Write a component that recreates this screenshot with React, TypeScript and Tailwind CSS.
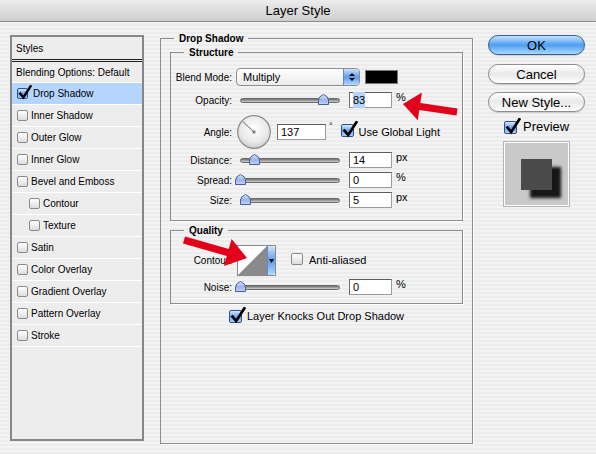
import React from "react";

const FONT = "font-['Liberation_Sans',Arial,sans-serif]";

function Checkbox({ checked, size = 11 }: { checked?: boolean; size?: number }) {
  const dim = size === 13 ? "w-[13px] h-[13px]" : size === 12 ? "w-[12px] h-[12px]" : "w-[11px] h-[11px]";
  if (checked) {
    return (
      <span
        className={`relative inline-block shrink-0 rounded-[2px] border border-[#2d4f8f] bg-linear-to-b from-[#d6e8fe] via-[#6aa6ee] to-[#a9d2fb] ${dim}`}
      >
        <svg
          className="absolute left-[0px] top-[-4px]"
          width={size + 3}
          height={size + 4}
          viewBox="0 0 14 15"
        >
          <path d="M2.2 8.6 L5.4 12.4 L12.6 1.2" stroke="#000" strokeWidth="2.4" fill="none" strokeLinecap="square" />
        </svg>
      </span>
    );
  }
  return (
    <span
      className={`inline-block shrink-0 rounded-[2px] border border-[#8a8a8a] bg-linear-to-b from-[#ffffff] to-[#dcdcdc] ${dim}`}
    />
  );
}

function Slider({ value }: { value: number }) {
  return (
    <div className="relative w-[108px] h-[16px] px-[4px] flex items-center">
      <div className="w-full h-[5px] rounded-full border border-[#6b6b6b] bg-linear-to-b from-[#6e6e6e] to-[#d0d0d0]" />
      <svg className="absolute top-[2px]" style={{ left: 4 + value - 5.5 }} width="11" height="11" viewBox="0 0 11 11">
        <defs>
          <linearGradient id={`th${value}`} x1="0" y1="0" x2="0" y2="1">
            <stop offset="0" stopColor="#dbe6fb" />
            <stop offset="0.55" stopColor="#98b3ea" />
            <stop offset="1" stopColor="#c3d6f7" />
          </linearGradient>
        </defs>
        <path d="M5.5 0.5 Q10.5 2.5 10.5 6 L10.5 10.5 L0.5 10.5 L0.5 6 Q0.5 2.5 5.5 0.5 Z" fill={`url(#th${value})`} stroke="#4d6291" strokeWidth="1" />
      </svg>
    </div>
  );
}

function NumField({ value, w = "w-[43px]", selected }: { value: string; w?: string; selected?: boolean }) {
  return (
    <div
      className={`${w} h-[16px] bg-white border border-[#9a9a9a] border-t-[#5c5c5c] border-l-[#6c6c6c] pl-[3px] flex items-center text-[11px]`}
    >
      <span className={selected ? "bg-[#b4d4fd]" : ""}>{value}</span>
    </div>
  );
}

function Label({ children }: { children: React.ReactNode }) {
  return <div className="w-[61px] mr-[4px] text-right shrink-0">{children}</div>;
}

function Group({
  title,
  className,
  legendClass = "ml-[13px]",
  children,
}: {
  title: string;
  className?: string;
  legendClass?: string;
  children: React.ReactNode;
}) {
  return (
    <fieldset className={`border border-[#8c8c8c] shadow-[1px_1px_0_#ffffff] ${className ?? ""}`}>
      <legend className={`${legendClass} px-[5px] font-bold text-[10px] leading-[13px]`}>{title}</legend>
      {children}
    </fieldset>
  );
}

const styleRows: { name: string; checked?: boolean; indent?: boolean; active?: boolean }[] = [
  { name: "Drop Shadow", checked: true, active: true },
  { name: "Inner Shadow" },
  { name: "Outer Glow" },
  { name: "Inner Glow" },
  { name: "Bevel and Emboss" },
  { name: "Contour", indent: true },
  { name: "Texture", indent: true },
  { name: "Satin" },
  { name: "Color Overlay" },
  { name: "Gradient Overlay" },
  { name: "Pattern Overlay" },
  { name: "Stroke" },
];

function StylesList() {
  return (
    <div className="mt-[13px] w-[134px] h-[406px] border-2 border-[#878787] bg-[#ededed] shrink-0">
      <div className="h-[25px] flex items-center pl-[4px] border-b-[3px] border-double border-[#1e1e1e]">Styles</div>
      <div className="h-[21px] flex items-center pl-[4px] border-b border-white">Blending Options: Default</div>
      {styleRows.map((r) => (
        <div
          key={r.name}
          className={`h-[22px] flex items-center border-b border-white ${r.indent ? "pl-[17px]" : "pl-[5px]"} ${
            r.active ? "bg-[#b5d5ff]" : ""
          }`}
        >
          <Checkbox checked={r.checked} />
          <span className={r.checked ? "ml-[5px]" : "ml-[3px]"}>{r.name}</span>
        </div>
      ))}
    </div>
  );
}

function BlendSelect() {
  return (
    <div className="w-[124px] h-[18px] rounded-[4px] border border-[#8e8e8e] bg-linear-to-b from-[#ffffff] to-[#ececec] flex overflow-hidden">
      <div className="flex-1 pl-[6px] flex items-center text-[11px]">Multiply</div>
      <div className="w-[16px] h-full border-l border-[#6d86b8] bg-linear-to-b from-[#cfe3fd] via-[#5c9ded] to-[#b3d8ff] flex flex-col items-center justify-center gap-[2px]">
        <svg width="6" height="3" viewBox="0 0 6 3"><path d="M0 3 L3 0 L6 3 Z" fill="#000" /></svg>
        <svg width="6" height="3" viewBox="0 0 6 3"><path d="M0 0 L3 3 L6 0 Z" fill="#000" /></svg>
      </div>
    </div>
  );
}

function Dial() {
  return (
    <svg width="34" height="36" viewBox="0 0 34 36" className="ml-[1px] shrink-0">
      <defs>
        <radialGradient id="dial" cx="0.5" cy="0.4" r="0.6">
          <stop offset="0" stopColor="#ffffff" />
          <stop offset="0.7" stopColor="#e8e8e8" />
          <stop offset="1" stopColor="#cdcdcd" />
        </radialGradient>
      </defs>
      <circle cx="17" cy="18" r="16.3" fill="url(#dial)" stroke="#8c8c8c" strokeWidth="1.2" />
      <line x1="17" y1="18" x2="6" y2="7.8" stroke="#555" strokeWidth="0.9" />
      <rect x="15.6" y="16.6" width="2.8" height="2.8" fill="#777" />
    </svg>
  );
}

function ContourPicker() {
  return (
    <div className="w-[39px] h-[31px] border border-[#8a8a8a] flex shrink-0 bg-white">
      <svg width="29" height="29" viewBox="0 0 29 29" className="shrink-0">
        <rect width="29" height="29" fill="#ffffff" />
        <path d="M0 29 L29 0 L29 29 Z" fill="#8a8a8a" />
      </svg>
      <div className="flex-1 rounded-r-[3px] border-l border-[#6d86b8] bg-linear-to-b from-[#cfe3fd] via-[#5c9ded] to-[#b3d8ff] flex items-center justify-center">
        <svg width="5" height="4" viewBox="0 0 5 4"><path d="M0 0 L5 0 L2.5 4 Z" fill="#000" /></svg>
      </div>
    </div>
  );
}

function MainGroup() {
  return (
    <Group
      title="Drop Shadow"
      legendClass="ml-[4px]"
      className="ml-[16px] mt-[10px] w-[313px] h-[412px] px-[9px] shrink-0"
    >
      <Group title="Structure" className="mt-[1px] w-full">
        <div className="pt-[9px] pb-[11px] flex flex-col">
          <div className="h-[18px] flex items-center">
            <Label>Blend Mode:</Label>
            <BlendSelect />
            <div className="ml-[5px] w-[33px] h-[14px] bg-black border border-[#7a7a7a]" />
          </div>
          <div className="mt-[5px] h-[18px] flex items-center">
            <Label>Opacity:</Label>
            <Slider value={83} />
            <div className="ml-[5px]"><NumField value="83" selected /></div>
            <span className="ml-[4px] self-start text-[11px] leading-[12px]">%</span>
          </div>
          <div className="mt-[5px] h-[36px] flex items-center">
            <Label>Angle:</Label>
            <Dial />
            <div className="ml-[6px]"><NumField value="137" w="w-[49px]" /></div>
            <span className="ml-[3px] self-start mt-[8px] text-[9px] leading-[9px]">°</span>
            <span className="ml-[8px]"><Checkbox checked size={13} /></span>
            <span className="ml-[5px] text-[11px]">Use Global Light</span>
          </div>
          <div className="mt-[1px] h-[18px] flex items-center">
            <Label>Distance:</Label>
            <Slider value={14} />
            <div className="ml-[5px]"><NumField value="14" /></div>
            <span className="ml-[4px] self-start text-[11px] leading-[12px]">px</span>
          </div>
          <div className="mt-[2px] h-[18px] flex items-center">
            <Label>Spread:</Label>
            <Slider value={0} />
            <div className="ml-[5px]"><NumField value="0" /></div>
            <span className="ml-[4px] self-start text-[11px] leading-[12px]">%</span>
          </div>
          <div className="mt-[2px] h-[18px] flex items-center">
            <Label>Size:</Label>
            <Slider value={5} />
            <div className="ml-[5px]"><NumField value="5" /></div>
            <span className="ml-[4px] self-start text-[11px] leading-[12px]">px</span>
          </div>
        </div>
      </Group>
      <Group title="Quality" className="mt-[3px] w-full">
        <div className="pt-[8px] pb-[7px] flex flex-col">
          <div className="h-[31px] flex items-center">
            <Label>Contour:</Label>
            <div className="ml-[1px]"><ContourPicker /></div>
            <span className="ml-[15px]"><Checkbox size={12} /></span>
            <span className="ml-[6px] text-[11px]">Anti-aliased</span>
          </div>
          <div className="mt-[2px] h-[18px] flex items-center">
            <Label>Noise:</Label>
            <Slider value={0} />
            <div className="ml-[5px]"><NumField value="0" /></div>
            <span className="ml-[4px] self-start text-[11px] leading-[12px]">%</span>
          </div>
        </div>
      </Group>
      <div className="mt-[3px] h-[18px] flex items-center justify-center">
        <Checkbox checked size={13} />
        <span className="ml-[5px] text-[11px]">Layer Knocks Out Drop Shadow</span>
      </div>
    </Group>
  );
}

function Button({ children, primary, className }: { children: React.ReactNode; primary?: boolean; className?: string }) {
  return (
    <div
      className={`w-[97px] h-[20px] rounded-full border flex items-center justify-center text-[13px] leading-none ${
        primary
          ? "border-[#3a5b96] bg-linear-to-b from-[#c4e2ff] via-[#4e9def] to-[#a7d8ff]"
          : "border-[#8d8d8d] bg-linear-to-b from-[#ffffff] via-[#e9e9e9] to-[#ffffff]"
      } shadow-[0_1px_1px_rgba(0,0,0,0.15)] ${className ?? ""}`}
    >
      {children}
    </div>
  );
}

function RightColumn() {
  return (
    <div className="ml-[15px] mt-[13px] w-[97px] shrink-0 flex flex-col">
      <Button primary>OK</Button>
      <Button className="mt-[9px]">Cancel</Button>
      <Button className="mt-[8px]">New Style...</Button>
      <div className="mt-[7px] h-[16px] pl-[16px] flex items-center">
        <Checkbox checked size={13} />
        <span className="ml-[6px] text-[13px]">Preview</span>
      </div>
      <div className="mt-[7px] ml-[16px] w-[65px] h-[64px] bg-[#c9c9c9] border border-white shadow-[0_0_0_1px_#b5b5b5] pt-[16px] pl-[16px]">
        <div className="w-[31px] h-[31px] bg-[#4a4a4a] shadow-[9px_8px_3px_#161616]" />
      </div>
    </div>
  );
}

function arrow(tail: [number, number], tip: [number, number], headLen: number, headHalf: number, shaftHalf: number) {
  const dx = tip[0] - tail[0];
  const dy = tip[1] - tail[1];
  const len = Math.hypot(dx, dy);
  const ux = dx / len;
  const uy = dy / len;
  const px = -uy;
  const py = ux;
  const bx = tip[0] - ux * headLen;
  const by = tip[1] - uy * headLen;
  const pts = [
    [tail[0] + px * shaftHalf, tail[1] + py * shaftHalf],
    [bx + px * shaftHalf, by + py * shaftHalf],
    [bx + px * headHalf, by + py * headHalf],
    [tip[0], tip[1]],
    [bx - px * headHalf, by - py * headHalf],
    [bx - px * shaftHalf, by - py * shaftHalf],
    [tail[0] - px * shaftHalf, tail[1] - py * shaftHalf],
  ];
  return pts.map((p) => p.map((v) => v.toFixed(1)).join(",")).join(" ");
}

function Arrows() {
  return (
    <svg className="absolute inset-0 pointer-events-none" width="596" height="454" viewBox="0 0 596 454">
      <polygon points={arrow([457, 112], [403, 104], 17, 14, 3.6)} fill="#e2001a" />
      <polygon points={arrow([184, 240], [247, 258], 20, 14, 3.6)} fill="#e2001a" />
    </svg>
  );
}

export default function App() {
  return (
    <div
      className={`relative w-[596px] h-[454px] overflow-hidden text-[10px] text-black ${FONT} bg-[repeating-linear-gradient(180deg,#ececec_0px,#ececec_2px,#f3f3f3_2px,#f3f3f3_4px)]`}
    >
      <div className="h-[22px] border-b border-[#8e8e8e] bg-linear-to-b from-[#ececec] to-[#cfcfcf] flex items-center justify-center text-[13px]">
        Layer Style
      </div>
      <div className="flex items-start pl-[10px]">
        <StylesList />
        <MainGroup />
        <RightColumn />
      </div>
      <Arrows />
    </div>
  );
}
